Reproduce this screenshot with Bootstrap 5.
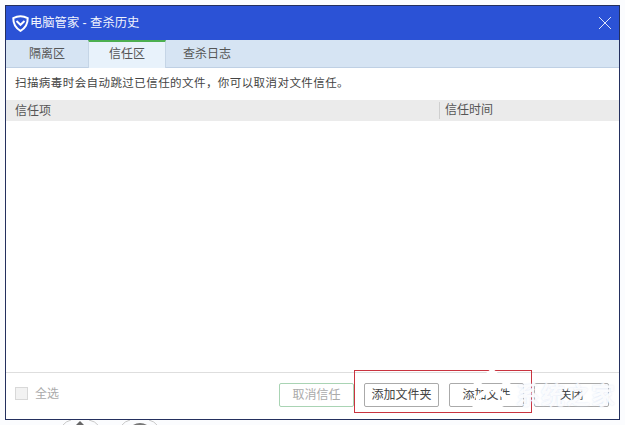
<!DOCTYPE html>
<html lang="zh">
<head>
    <meta charset="UTF-8">
    <title>查杀历史</title>
    <link href="https://cdn.jsdelivr.net/npm/bootstrap@5.3.0/dist/css/bootstrap.min.css" rel="stylesheet">
    <style>
        html, body { height: 425px; overflow: hidden; }
        body {
            background-color: #fbfcfe;
            color: #444;
            font-family: "Liberation Sans", "Noto Sans CJK SC", sans-serif;
            font-size: 12px;
            padding: 5px;
            position: relative;
        }
        .pc-window {
            width: 615px;
            height: 415px;
            background: #fff;
            border: 1px solid #24305e;
            position: relative;
        }
        .pc-title {
            height: 34px;
            background-color: #2b52d6;
            color: #f1f4fd;
            padding-left: 6px;
            gap: 1px;
            font-size: 12.3px;
        }
        .pc-close { margin-left: auto; margin-right: 8px; width: 12px; height: 12px; }
        .pc-tabs {
            height: 28px;
            background-color: #d6e4f3;
            border-bottom: 1px solid #bfd0e4;
        }
        .pc-tab {
            width: 82px;
            text-align: center;
            line-height: 28px;
            color: #555;
            font-size: 12px;
        }
        .pc-tab.on {
            width: 78px;
            background-color: #e8f2fb;
            border-top: 2px solid #4caf50;
            border-left: 1px solid #c5d5e6;
            border-right: 1px solid #c5d5e6;
            line-height: 25px;
            height: 28px;
        }
        .pc-note { height: 32px; padding-left: 9px; color: #444; font-size: 11.5px; letter-spacing: .43px; }
        .pc-head {
            height: 21px;
            background-color: #ebebeb;
            color: #555;
            font-size: 12px;
        }
        .pc-head-a { width: 433px; padding-left: 9px; }
        .pc-head-b { border-left: 1px solid #cfcfcf; padding-left: 5px; height: 17px; line-height: 17px; }
        .pc-body { height: 251px; }
        .pc-foot {
            height: 47px;
            border-top: 1px solid #dedede;
            padding-left: 9px;
            position: relative;
        }
        .pc-check { width: 13px; height: 13px; background: #f2f2f2; border: 1px solid #d8d8d8; margin-right: 7px; }
        .pc-all { color: #aaa; }
        .pc-btn {
            height: 24px;
            width: 75px;
            border: 1px solid #aaa;
            border-radius: 2px;
            background: #fff;
            color: #444;
            font-size: 12px;
            padding: 0;
            line-height: 22px;
            margin-top: 10px;
        }
        .pc-btn.off { border-color: #a9d4b4; color: #aaa; }
        .pc-btns { margin-left: auto; margin-right: 10px; gap: 10px; }
        .pc-mark {
            position: absolute;
            left: 348px;
            top: 364px;
            width: 178px;
            height: 43px;
            border: 1px solid #c9333f;
            pointer-events: none;
        }
        .pc-water-logo {
            position: absolute;
            left: 458px;
            top: 360px;
            pointer-events: none;
        }
        .pc-water {
            position: absolute;
            left: 510px;
            top: 375px;
            color: rgba(255,255,255,.9);
            font-size: 24px;
            font-weight: 700;
            line-height: 30px;
            letter-spacing: 1px;
            white-space: nowrap;
            text-shadow: 0 0 2px rgba(205,218,242,.75);
            pointer-events: none;
        }
        .pc-strip {
            position: absolute;
            left: 0;
            top: 420px;
            display: block;
        }
    </style>
</head>
<body>

<svg class="pc-strip" width="625" height="5" viewBox="0 0 625 5">
    <path d="M62 6Q66 1 71 0M89 0Q95 1 99 6M121 6Q125 1 130 0M149 0Q154 1 158 6" fill="none" stroke="#c8c8c8"/>
    <path d="M80 1l4 4h-8z" fill="#666"/>
    <path d="M133 5q7-4 14 0z" fill="#777"/>
</svg>

<div class="pc-window">
    <div class="pc-title d-flex align-items-center">
        <svg width="17" height="17" viewBox="0 0 17 17">
            <path d="M8.5 1.2C6 1.2 3.6 1.900 1.300 3.200c-.1 5.400 2.400 9.800 7.200 12.600 4.800-2.800 7.300-7.200 7.200-12.600C13.400 1.900 11 1.200 8.500 1.200z" fill="none" stroke="#fff" stroke-width="2"/>
            <path d="M4.500 6l4 3.800L12.500 6" fill="none" stroke="#fff" stroke-width="2"/>
        </svg>
        <span>电脑管家 - 查杀历史</span>
        <svg class="pc-close" viewBox="0 0 12 12"><path d="M0 0L12 12M12 0L0 12" stroke="#dfe6fa" stroke-width="1"/></svg>
    </div>

    <div class="pc-tabs d-flex">
        <div class="pc-tab">隔离区</div>
        <div class="pc-tab on">信任区</div>
        <div class="pc-tab">查杀日志</div>
    </div>

    <div class="pc-note d-flex align-items-center">扫描病毒时会自动跳过已信任的文件，你可以取消对文件信任。</div>

    <div class="pc-head d-flex align-items-center">
        <div class="pc-head-a">信任项</div>
        <div class="pc-head-b">信任时间</div>
    </div>

    <div class="pc-body"></div>

    <div class="pc-foot d-flex">
        <div class="d-flex align-items-center" style="height:41px">
            <span class="pc-check"></span>
            <span class="pc-all">全选</span>
        </div>
        <div class="pc-btns d-flex">
            <button class="pc-btn off">取消信任</button>
            <button class="pc-btn">添加文件夹</button>
            <button class="pc-btn">添加文件</button>
            <button class="pc-btn">关闭</button>
        </div>
    </div>

    <div class="pc-mark"></div>
    <svg class="pc-water-logo" width="56" height="52" viewBox="0 0 56 52">
        <path d="M28 2L54 24H46L28 9L10 24H2z" fill="#fff"/>
        <path d="M12 30L28 18L44 30V36L28 24L12 36z" fill="#fff"/>
        <path d="M8 40H40L28 46H14z" fill="#fff"/>
    </svg>
    <div class="pc-water">系统之家</div>
</div>

<script src="https://cdn.jsdelivr.net/npm/bootstrap@5.3.0/dist/js/bootstrap.bundle.min.js"></script>
</body>
</html>
